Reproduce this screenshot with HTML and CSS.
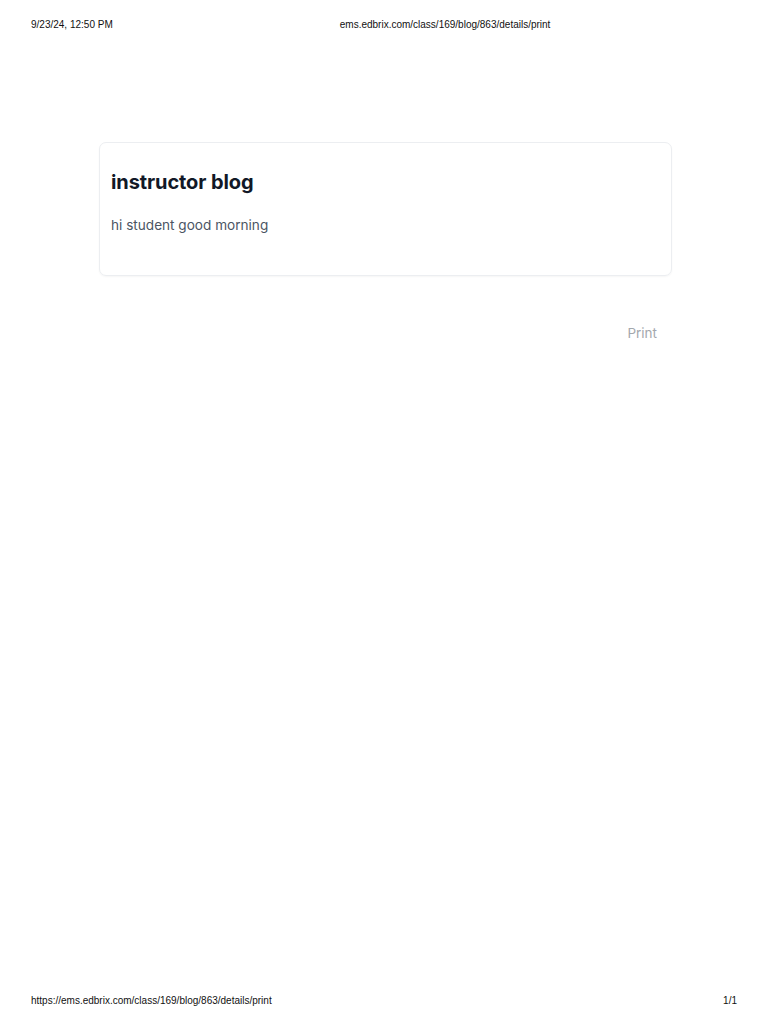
FILE: index.html
```html
<!DOCTYPE html>
<html>
<head>
<meta charset="utf-8">
<link rel="stylesheet" href="styles.css">
</head>
<body>
<div class="page">
  <header class="print-header">
    <span class="date">9/23/24, 12:50 PM</span>
    <span class="title-url">ems.edbrix.com/class/169/blog/863/details/print</span>
  </header>
  <main class="content">
    <article class="card">
      <h1 class="card-title">instructor blog</h1>
      <p class="card-body">hi student good morning</p>
    </article>
    <div class="actions">
      <button class="print-btn">Print</button>
    </div>
  </main>
  <footer class="print-footer">
    <span>https://ems.edbrix.com/class/169/blog/863/details/print</span>
    <span>1/1</span>
  </footer>
</div>
</body>
</html>
```

FILE: styles.css
```css
html, body {
  margin: 0;
  padding: 0;
  background: #ffffff;
}
.page {
  width: 768px;
  height: 1024px;
  display: flex;
  flex-direction: column;
  box-sizing: border-box;
}
.print-header, .print-footer {
  font-family: "Liberation Sans", Arial, sans-serif;
  font-size: 10px;
  color: #111;
  display: flex;
  padding: 0 31px;
}
.print-header {
  padding-top: 19px;
  height: 12px;
}
.title-url {
  margin-left: 227px;
}
.print-footer {
  justify-content: space-between;
  height: 12px;
  padding-bottom: 17px;
}
.content {
  flex: 1;
  padding: 111px 96px 0 99px;
  font-family: Inter, "Noto Sans", sans-serif;
}
.card {
  width: 573px;
  box-sizing: border-box;
  border: 1px solid #eceef1;
  border-radius: 7px;
  padding: 28px 12px 40px 11px;
  box-shadow: 0 1px 2px rgba(0,0,0,0.04);
}
.card-title {
  margin: 0;
  font-size: 20px;
  font-weight: 700;
  line-height: 22px;
  color: #111827;
  letter-spacing: -0.1px;
}
.card-body {
  margin: 22px 0 0;
  font-size: 13.6px;
  line-height: 20px;
  color: #4b5563;
}
.actions {
  width: 573px;
  display: flex;
  justify-content: flex-end;
  margin-top: 47px;
}
.print-btn {
  background: none;
  border: none;
  font-family: Inter, "Noto Sans", sans-serif;
  font-size: 13.5px;
  color: #a3a7ad;
  padding: 0 15px 0 0;
  line-height: 20px;
}
```
